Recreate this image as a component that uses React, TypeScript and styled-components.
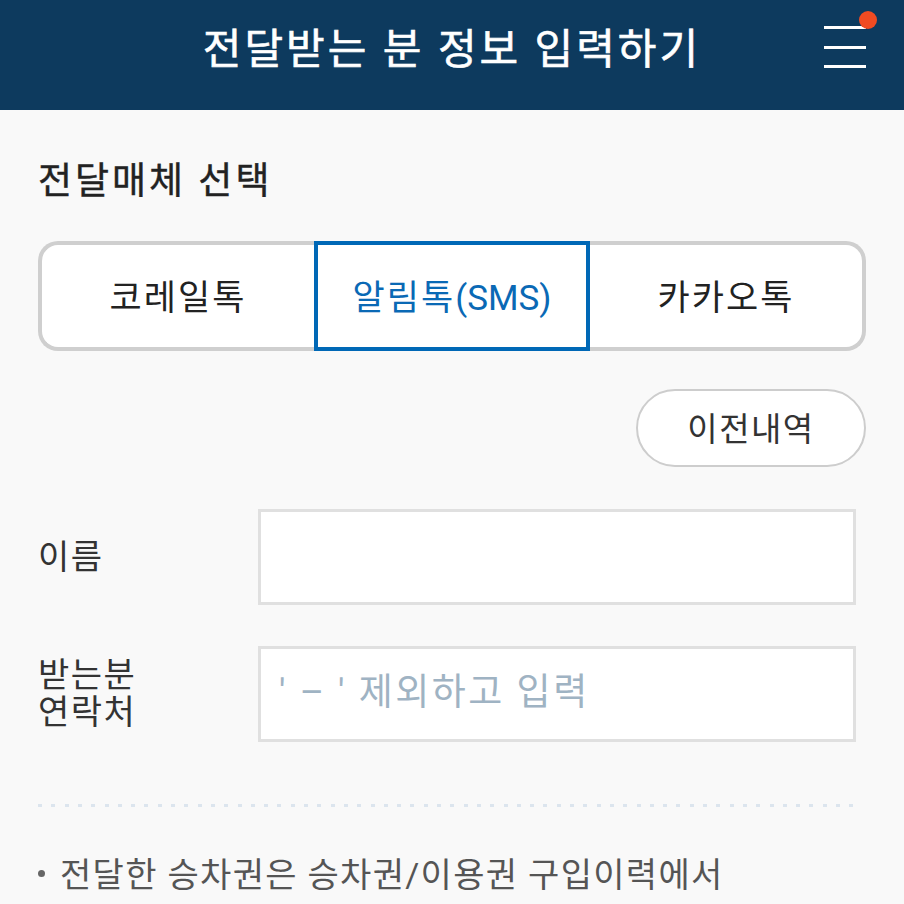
import * as React from 'react';
import styled, { createGlobalStyle } from 'styled-components';

const GlobalStyle = createGlobalStyle`
  html, body {
    margin: 0;
    padding: 0;
    background: #f9f9f9;
    overflow: hidden;
  }
  body {
    font-family: Roboto, "Noto Sans CJK KR", "Noto Sans", sans-serif;
    color: #222;
  }
  * {
    box-sizing: border-box;
  }
`;

const media = [
  { name: '코레일톡' },
  { name: '알림톡', sub: '(SMS)' },
  { name: '카카오톡' },
];

const App = () => {
  const [selected, setSelected] = React.useState(1);

  return (
    <>
      <GlobalStyle />
      <Header>
        <span />
        <HeaderTitle>전달받는 분 정보 입력하기</HeaderTitle>
        <MenuButton aria-label="메뉴">
          <MenuLine />
          <MenuLine />
          <MenuLine />
          <MenuBadge />
        </MenuButton>
      </Header>

      <Content>
        <SectionTitle>전달매체 선택</SectionTitle>
        <Tabs>
          {media.map((m, i) => (
            <Tab
              key={m.name}
              $active={i === selected}
              $first={i === 0}
              $last={i === media.length - 1}
              onClick={() => setSelected(i)}
            >
              {m.name}
              {m.sub && <TabSub>{m.sub}</TabSub>}
            </Tab>
          ))}
        </Tabs>

        <HistoryRow>
          <HistoryButton>이전내역</HistoryButton>
        </HistoryRow>

        <FieldRow>
          <FieldLabel>이름</FieldLabel>
          <FieldInput type="text" />
        </FieldRow>
        <FieldRow>
          <FieldLabel>
            받는분
            <br />
            연락처
          </FieldLabel>
          <FieldInput type="tel" placeholder="' – ' 제외하고 입력" />
        </FieldRow>

        <Divider />

        <NoticeList>
          <NoticeItem>전달한 승차권은 승차권/이용권 구입이력에서</NoticeItem>
        </NoticeList>
      </Content>
    </>
  );
};

const Header = styled.header`
  display: grid;
  grid-template-columns: 1fr auto 1fr;
  align-items: center;
  height: 110px;
  background: #0d3a5e;
  padding: 0 38px 0 38px;
`;

const HeaderTitle = styled.h1`
  margin: 0;
  color: #fff;
  font-size: 42px;
  font-weight: 400;
  letter-spacing: 3px;
  padding-bottom: 20px;
  -webkit-text-stroke: 0.6px #fff;
`;

const MenuButton = styled.button`
  position: relative;
  justify-self: end;
  display: flex;
  flex-direction: column;
  gap: 16.5px;
  width: 42px;
  margin: 0 0 16px 0;
  padding: 0;
  border: 0;
  background: none;
`;

const MenuLine = styled.span`
  display: block;
  height: 3px;
  background: #fff;
`;

const MenuBadge = styled.span`
  position: absolute;
  top: -15px;
  right: -11px;
  width: 18px;
  height: 18px;
  border-radius: 50%;
  background: #f04b22;
`;

const Content = styled.main`
  padding: 0 38px;
`;

const SectionTitle = styled.h2`
  margin: 0;
  padding: 52px 0 39px;
  font-size: 37px;
  font-weight: 400;
  letter-spacing: 3px;
  line-height: 40px;
  color: #222;
  -webkit-text-stroke: 0.4px #222;
`;

const Tabs = styled.div`
  display: grid;
  grid-template-columns: repeat(3, 1fr);
  height: 110px;
`;

const Tab = styled.button<{ $active: boolean; $first: boolean; $last: boolean }>`
  background: #fff;
  border: 4px solid ${({ $active }) => ($active ? '#0068b6' : '#cfcfcf')};
  border-left-width: ${({ $active, $first }) => ($active || $first ? '4px' : '0')};
  border-right-width: ${({ $active, $last }) => ($active || $last ? '4px' : '0')};
  border-radius: ${({ $first, $last }) =>
    $first ? '20px 0 0 20px' : $last ? '0 20px 20px 0' : '0'};
  font-family: inherit;
  font-size: 35px;
  font-weight: 400;
  letter-spacing: 2px;
  color: ${({ $active }) => ($active ? '#0a69b5' : '#222')};
  padding: 0 0 4px;
  cursor: pointer;
`;

const TabSub = styled.span`
  letter-spacing: 0;
`;

const HistoryRow = styled.div`
  display: flex;
  justify-content: flex-end;
  padding: 38px 0 42px;
`;

const HistoryButton = styled.button`
  width: 230px;
  height: 78px;
  border: 2px solid #cdcdcd;
  border-radius: 39px;
  background: #fff;
  font-family: inherit;
  font-size: 33px;
  letter-spacing: 1.5px;
  color: #333;
  padding: 0 0 2px;
`;

const FieldRow = styled.div`
  display: grid;
  grid-template-columns: 220px 1fr;
  align-items: center;
  margin-bottom: 41px;
  padding-right: 10px;
`;

const FieldLabel = styled.label`
  font-size: 34px;
  line-height: 37px;
  letter-spacing: 1.5px;
  color: #333;
`;

const FieldInput = styled.input`
  height: 96px;
  border: 3px solid #e0e0e0;
  background: #fff;
  font-family: inherit;
  font-size: 37px;
  letter-spacing: 2.5px;
  padding: 0 18px 4px;
  outline: none;
  &::placeholder {
    color: #9fb3c3;
  }
`;

const Divider = styled.hr`
  height: 3px;
  margin: 62px 10px 0 0;
  border: 0;
  background-image: repeating-linear-gradient(
    to right,
    #dce5ee 0 4px,
    transparent 4px 13.3px
  );
`;

const NoticeList = styled.ul`
  list-style: none;
  margin: 0;
  padding: 41px 0 0;
`;

const NoticeItem = styled.li`
  position: relative;
  padding-left: 22px;
  font-size: 34px;
  letter-spacing: 1.3px;
  color: #555;
  &::before {
    content: '';
    position: absolute;
    left: 0;
    top: 22px;
    width: 7px;
    height: 7px;
    border-radius: 50%;
    background: #666;
  }
`;

export default App;
